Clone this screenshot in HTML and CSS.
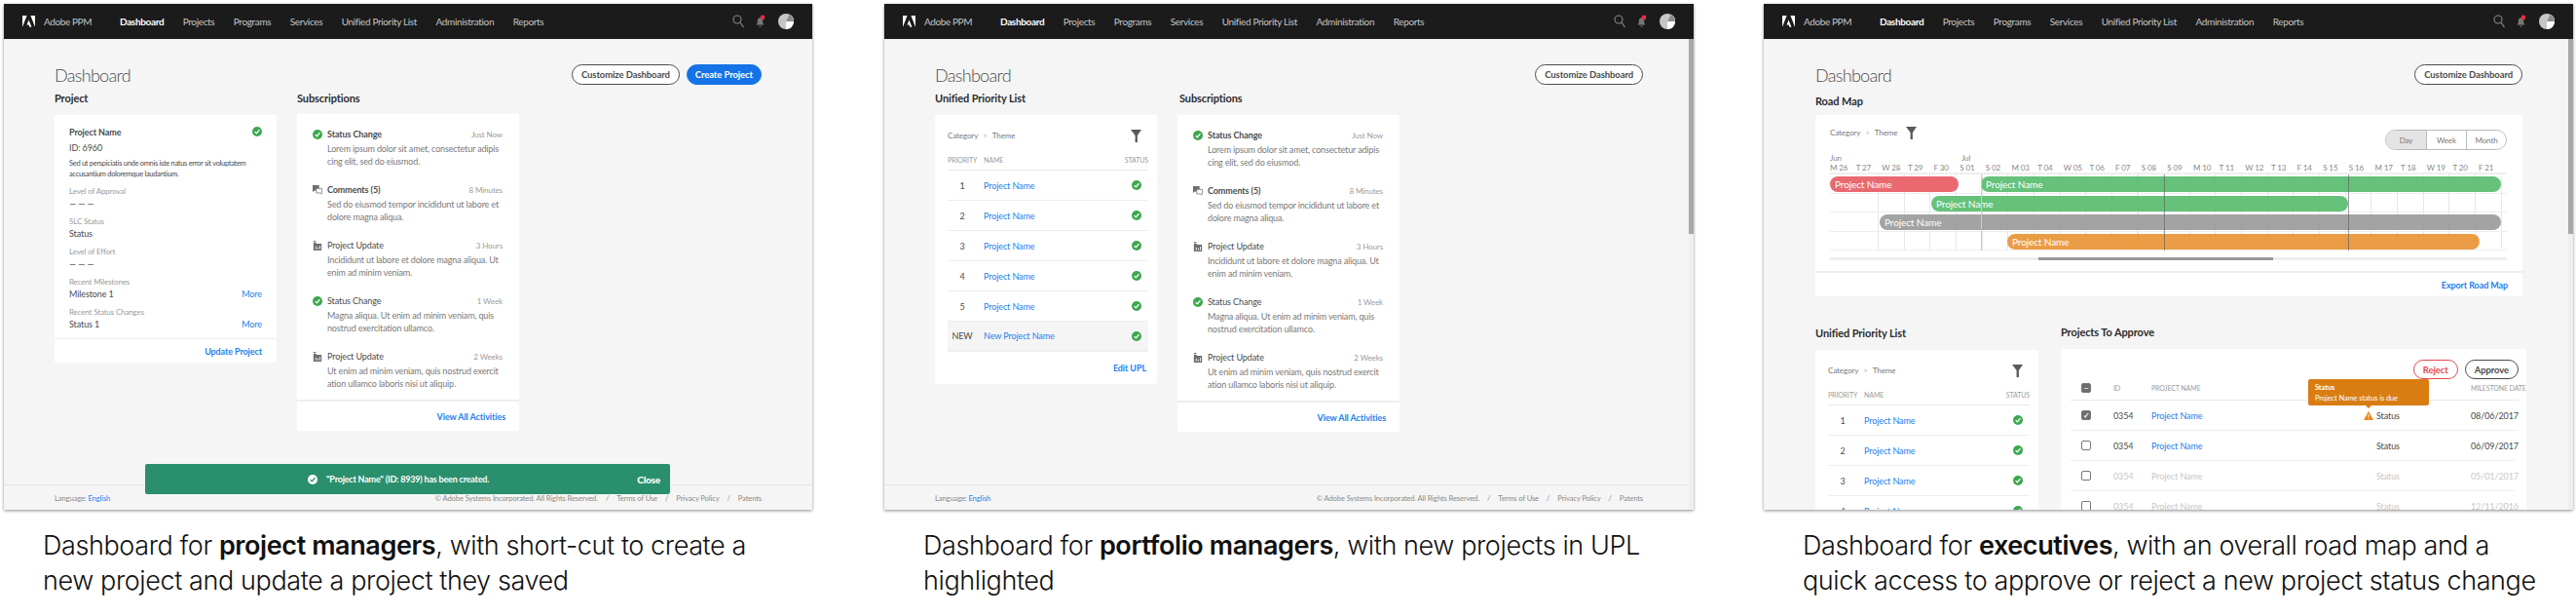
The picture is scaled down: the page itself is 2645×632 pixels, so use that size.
FILE: index.html
```html
<!DOCTYPE html>
<html lang="en">
<head>
    <meta charset="UTF-8">
    <title>Adobe PPM Dashboards</title>
    <link rel="stylesheet" href="styles.css">
</head>
<body>
    <svg class="icon-defs" width="0" height="0">
        <symbol id="i-logo" viewBox="0 0 24 22"><path d="M0 0h8.5L0 21.5zM15.5 0H24v21.5zM12 8l5.4 13.500h-3.700l-1.500-4h-3.900z" fill="#fff"/></symbol>
        <symbol id="i-search" viewBox="0 0 12 14"><circle cx="5" cy="5" r="4" fill="none" stroke="#8a8a8a" stroke-width="1.100"/><path d="M8 8l3.500 5" stroke="#8a8a8a" stroke-width="1.200" fill="none"/></symbol>
        <symbol id="i-bell" viewBox="0 0 11 14"><path d="M4.500 3.500a3 3 0 0 1 2 0c1.500.6 1.700 2 1.700 3.500 0 1.700.5 2.600 1.300 3.500H1.500c.8-.9 1.300-1.800 1.300-3.500 0-1.500.2-2.900 1.700-3.500z" fill="#777"/><path d="M4 11.500h3l-1.500 1.500z" fill="#777"/><circle cx="8" cy="3" r="2.400" fill="#e0313b"/></symbol>
        <symbol id="i-avatar" viewBox="0 0 16 16"><circle cx="8" cy="8" r="8" fill="#c6c6c6"/><path d="M8 8L11.500 .8A8 8 0 0 1 8 16z" fill="#fff"/><path d="M11.500 .8A8 8 0 0 1 16 8L8 8z" fill="#8c8c8c"/></symbol>
        <symbol id="i-check" viewBox="0 0 12 12"><circle cx="6" cy="6" r="6" fill="#3da74e"/><path d="M3.200 6.200l2 2.100 3.700-4.400" fill="none" stroke="#fff" stroke-width="1.500"/></symbol>
        <symbol id="i-check-white" viewBox="0 0 12 12"><circle cx="6" cy="6" r="6" fill="#fff"/><path d="M3.200 6.200l2 2.100 3.700-4.400" fill="none" stroke="#2a8f6c" stroke-width="1.500"/></symbol>
        <symbol id="i-comment" viewBox="0 0 12 12"><path d="M0 0h8v6.500H2.500L0 8.500z" fill="#6e6e6e"/><path d="M4.500 4h7v5.500h-1V11L9 9.500H4.500z" fill="#fff" stroke="#6e6e6e" stroke-width=".9"/></symbol>
        <symbol id="i-update" viewBox="0 0 12 12"><path d="M1 0h3v1.500H1zM1 2.500h3l1 1h6V12H1z" fill="#6e6e6e"/><path d="M4 10.500V7M6.500 10.500V8M9 10.500V6" stroke="#fff" stroke-width="1"/></symbol>
        <symbol id="i-filter" viewBox="0 0 12 14"><path d="M0 0h12L7.500 6.500V14h-2.500V6.500z" fill="#5a5a5a"/></symbol>
        <symbol id="i-warn" viewBox="0 0 10 9"><path d="M5 0l5 9H0z" fill="#e68619"/><path d="M5 3v3M5 6.800v1" stroke="#fff" stroke-width="1"/></symbol>
    </svg>

    <div class="shots">
        <!-- project managers -->
        <section class="shot">
            <div class="board">
                <header class="topbar">
                    <svg class="logo"><use href="#i-logo"/></svg>
                    <span class="product">Adobe PPM</span>
                    <nav class="nav">
                        <a class="active">Dashboard</a><a>Projects</a><a>Programs</a><a>Services</a><a>Unified Priority List</a><a>Administration</a><a>Reports</a>
                    </nav>
                    <svg class="ic-search"><use href="#i-search"/></svg>
                    <svg class="ic-bell"><use href="#i-bell"/></svg>
                    <svg class="ic-avatar"><use href="#i-avatar"/></svg>
                </header>
                <main class="content">
                    <div class="page-head">
                        <h1>Dashboard</h1>
                        <div class="btns">
                            <button class="btn">Customize Dashboard</button>
                            <button class="btn btn-blue">Create Project</button>
                        </div>
                    </div>
                    <div class="columns">
                        <div class="col">
                            <h2>Project</h2>
                            <div class="card project-card">
                                <div class="project-body">
                                    <div class="project-top"><b>Project Name</b><svg class="ic"><use href="#i-check"/></svg></div>
                                    <div class="project-id">ID: 6960</div>
                                    <p class="project-desc">Sed ut perspiciatis unde omnis iste natus error sit voluptatem<br>accusantium doloremque laudantium.</p>
                                    <div class="field"><label>Level of Approval</label><div class="val">— — —</div></div>
                                    <div class="field"><label>SLC Status</label><div class="val">Status</div></div>
                                    <div class="field"><label>Level of Effort</label><div class="val">— — —</div></div>
                                    <div class="field"><label>Recent Milestones</label><div class="val">Milestone 1<a>More</a></div></div>
                                    <div class="field"><label>Recent Status Changes</label><div class="val">Status 1<a>More</a></div></div>
                                </div>
                                <div class="card-foot"><a>Update Project</a></div>
                            </div>
                        </div>
                        <div class="col">
                            <h2>Subscriptions</h2>
                            <div class="card subs-card subs-up">
                                <div class="subs-list">
                                    <div class="sub"><div class="sub-top"><svg class="ic"><use href="#i-check"/></svg><b>Status Change</b><span>Just Now</span></div><p>Lorem ipsum dolor sit amet, consectetur adipis<br>cing elit, sed do eiusmod.</p></div>
                                    <div class="sub"><div class="sub-top"><svg class="ic"><use href="#i-comment"/></svg><b>Comments (5)</b><span>8 Minutes</span></div><p>Sed do eiusmod tempor incididunt ut labore et<br>dolore magna aliqua.</p></div>
                                    <div class="sub"><div class="sub-top"><svg class="ic"><use href="#i-update"/></svg><b class="plain">Project Update</b><span>3 Hours</span></div><p>Incididunt ut labore et dolore magna aliqua. Ut<br>enim ad minim veniam.</p></div>
                                    <div class="sub"><div class="sub-top"><svg class="ic"><use href="#i-check"/></svg><b class="plain">Status Change</b><span>1 Week</span></div><p>Magna aliqua. Ut enim ad minim veniam, quis<br>nostrud exercitation ullamco.</p></div>
                                    <div class="sub"><div class="sub-top"><svg class="ic"><use href="#i-update"/></svg><b class="plain">Project Update</b><span>2 Weeks</span></div><p>Ut enim ad minim veniam, quis nostrud exercit<br>ation ullamco laboris nisi ut aliquip.</p></div>
                                </div>
                                <div class="card-foot subs-foot"><a>View All Activities</a></div>
                            </div>
                        </div>
                    </div>
                </main>
                <footer class="foot">
                    <div>Language: <a>English</a></div>
                    <div class="foot-links"><span>© Adobe Systems Incorporated. All Rights Reserved.</span><i>/</i><span>Terms of Use</span><i>/</i><span>Privacy Policy</span><i>/</i><span>Patents</span></div>
                </footer>
                <div class="toast">
                    <svg class="ic"><use href="#i-check-white"/></svg>
                    <span>"Project Name" (ID: 8939) has been created.</span>
                    <b>Close</b>
                </div>
            </div>
            <p class="caption">Dashboard for <strong>project managers</strong>, with short-cut to create a<br>new project and update a project they saved</p>
        </section>

        <!-- portfolio managers -->
        <section class="shot shot-b">
            <div class="board">
                <header class="topbar">
                    <svg class="logo"><use href="#i-logo"/></svg>
                    <span class="product">Adobe PPM</span>
                    <nav class="nav">
                        <a class="active">Dashboard</a><a>Projects</a><a>Programs</a><a>Services</a><a>Unified Priority List</a><a>Administration</a><a>Reports</a>
                    </nav>
                    <svg class="ic-search"><use href="#i-search"/></svg>
                    <svg class="ic-bell"><use href="#i-bell"/></svg>
                    <svg class="ic-avatar"><use href="#i-avatar"/></svg>
                </header>
                <main class="content">
                    <div class="page-head">
                        <h1>Dashboard</h1>
                        <div class="btns"><button class="btn">Customize Dashboard</button></div>
                    </div>
                    <div class="columns">
                        <div class="col">
                            <h2>Unified Priority List</h2>
                            <div class="card upl-card">
                                <div class="upl-filter"><span class="crumb">Category<em>&gt;</em>Theme</span><svg class="ic-filter"><use href="#i-filter"/></svg></div>
                                <div class="upl-head"><span>PRIORITY</span><span>NAME</span><span>STATUS</span></div>
                                <div class="upl-row"><span>1</span><a>Project Name</a><svg class="ic"><use href="#i-check"/></svg></div>
                                <div class="upl-row"><span>2</span><a>Project Name</a><svg class="ic"><use href="#i-check"/></svg></div>
                                <div class="upl-row"><span>3</span><a>Project Name</a><svg class="ic"><use href="#i-check"/></svg></div>
                                <div class="upl-row"><span>4</span><a>Project Name</a><svg class="ic"><use href="#i-check"/></svg></div>
                                <div class="upl-row"><span>5</span><a>Project Name</a><svg class="ic"><use href="#i-check"/></svg></div>
                                <div class="upl-row upl-new"><span>NEW</span><a>New Project Name</a><svg class="ic"><use href="#i-check"/></svg></div>
                                <div class="upl-foot"><a>Edit UPL</a></div>
                            </div>
                        </div>
                        <div class="col">
                            <h2 class="nudge">Subscriptions</h2>
                            <div class="card subs-card">
                                <div class="subs-list">
                                    <div class="sub"><div class="sub-top"><svg class="ic"><use href="#i-check"/></svg><b>Status Change</b><span>Just Now</span></div><p>Lorem ipsum dolor sit amet, consectetur adipis<br>cing elit, sed do eiusmod.</p></div>
                                    <div class="sub"><div class="sub-top"><svg class="ic"><use href="#i-comment"/></svg><b>Comments (5)</b><span>8 Minutes</span></div><p>Sed do eiusmod tempor incididunt ut labore et<br>dolore magna aliqua.</p></div>
                                    <div class="sub"><div class="sub-top"><svg class="ic"><use href="#i-update"/></svg><b class="plain">Project Update</b><span>3 Hours</span></div><p>Incididunt ut labore et dolore magna aliqua. Ut<br>enim ad minim veniam.</p></div>
                                    <div class="sub"><div class="sub-top"><svg class="ic"><use href="#i-check"/></svg><b class="plain">Status Change</b><span>1 Week</span></div><p>Magna aliqua. Ut enim ad minim veniam, quis<br>nostrud exercitation ullamco.</p></div>
                                    <div class="sub"><div class="sub-top"><svg class="ic"><use href="#i-update"/></svg><b class="plain">Project Update</b><span>2 Weeks</span></div><p>Ut enim ad minim veniam, quis nostrud exercit<br>ation ullamco laboris nisi ut aliquip.</p></div>
                                </div>
                                <div class="card-foot subs-foot"><a>View All Activities</a></div>
                            </div>
                        </div>
                    </div>
                </main>
                <footer class="foot">
                    <div>Language: <a>English</a></div>
                    <div class="foot-links"><span>© Adobe Systems Incorporated. All Rights Reserved.</span><i>/</i><span>Terms of Use</span><i>/</i><span>Privacy Policy</span><i>/</i><span>Patents</span></div>
                </footer>
                <div class="scroll-track"><div class="scroll-thumb"></div></div>
            </div>
            <p class="caption">Dashboard for <strong>portfolio managers</strong>, with new projects in UPL<br>highlighted</p>
        </section>

        <!-- executives -->
        <section class="shot shot-c">
            <div class="board">
                <header class="topbar">
                    <svg class="logo"><use href="#i-logo"/></svg>
                    <span class="product">Adobe PPM</span>
                    <nav class="nav">
                        <a class="active">Dashboard</a><a>Projects</a><a>Programs</a><a>Services</a><a>Unified Priority List</a><a>Administration</a><a>Reports</a>
                    </nav>
                    <svg class="ic-search"><use href="#i-search"/></svg>
                    <svg class="ic-bell"><use href="#i-bell"/></svg>
                    <svg class="ic-avatar"><use href="#i-avatar"/></svg>
                </header>
                <main class="content content-c">
                    <div class="page-head">
                        <h1>Dashboard</h1>
                        <div class="btns"><button class="btn">Customize Dashboard</button></div>
                    </div>
                    <h2 class="road-title">Road Map</h2>
                    <div class="card road-card">
                        <div class="road-body">
                            <div class="road-top">
                                <span class="crumb">Category<em>&gt;</em>Theme<svg class="ic-filter"><use href="#i-filter"/></svg></span>
                                <div class="toggle"><span class="on">Day</span><span>Week</span><span>Month</span></div>
                            </div>
                            <div class="months"><span>Jun</span><span class="jul">Jul</span></div>
                            <div class="days">
                                <span>M 26</span><span>T 27</span><span>W 28</span><span>T 29</span><span>F 30</span><span>S 01</span><span>S 02</span><span>M 03</span><span>T 04</span><span>W 05</span><span>T 06</span><span>F 07</span><span>S 08</span><span>S 09</span><span>M 10</span><span>T 11</span><span>W 12</span><span>T 13</span><span>F 14</span><span>S 15</span><span>S 16</span><span>M 17</span><span>T 18</span><span>W 19</span><span>T 20</span><span>F 21</span>
                            </div>
                            <div class="gantt">
                                <div class="gantt-row"><div class="bar bar-red" style="width:132px">Project Name</div><div class="bar bar-green" style="margin-left:23px;width:534px">Project Name</div></div>
                                <div class="gantt-row"><div class="bar bar-green" style="margin-left:104px;width:428px">Project Name</div></div>
                                <div class="gantt-row"><div class="bar bar-grey" style="margin-left:51px;width:638px">Project Name</div></div>
                                <div class="gantt-row"><div class="bar bar-orange" style="margin-left:182px;width:485px">Project Name</div></div>
                                <div class="gantt-mark" style="left:155px"></div>
                                <div class="gantt-mark gantt-dark" style="left:343px"></div>
                                <div class="gantt-mark gantt-dark" style="left:532px"></div>
                            </div>
                            <div class="gantt-scroll"><div class="gantt-thumb"></div></div>
                        </div>
                        <div class="card-foot road-foot"><a>Export Road Map</a></div>
                    </div>
                    <div class="columns columns-c">
                        <div class="col col-upl">
                            <h2 class="low-title">Unified Priority List</h2>
                            <div class="card upl-card upl-c">
                                <div class="upl-filter"><span class="crumb">Category<em>&gt;</em>Theme</span><svg class="ic-filter"><use href="#i-filter"/></svg></div>
                                <div class="upl-head"><span>PRIORITY</span><span>NAME</span><span>STATUS</span></div>
                                <div class="upl-row"><span>1</span><a>Project Name</a><svg class="ic"><use href="#i-check"/></svg></div>
                                <div class="upl-row"><span>2</span><a>Project Name</a><svg class="ic"><use href="#i-check"/></svg></div>
                                <div class="upl-row"><span>3</span><a>Project Name</a><svg class="ic"><use href="#i-check"/></svg></div>
                                <div class="upl-row"><span>4</span><a>Project Name</a><svg class="ic"><use href="#i-check"/></svg></div>
                            </div>
                        </div>
                        <div class="col col-approve">
                            <h2 class="low-title">Projects To Approve</h2>
                            <div class="card approve-card">
                                <div class="approve-btns"><button class="btn btn-red">Reject</button><button class="btn">Approve</button></div>
                                <div class="ap-row ap-head"><span class="box box-on">−</span><span>ID</span><span>PROJECT NAME</span><span>PROJECT STATUS</span><span>MILESTONE DATE</span></div>
                                <div class="ap-row"><span class="box box-on">✓</span><span>0354</span><a>Project Name</a><span class="ap-status"><svg class="ic-warn"><use href="#i-warn"/></svg>Status</span><span>08/06/2017</span></div>
                                <div class="ap-row ap-short"><span class="box"></span><span>0354</span><a>Project Name</a><span>Status</span><span>06/09/2017</span></div>
                                <div class="ap-row ap-short ap-off"><span class="box"></span><span>0354</span><span>Project Name</span><span>Status</span><span>05/01/2017</span></div>
                                <div class="ap-row ap-short ap-off"><span class="box"></span><span>0354</span><span>Project Name</span><span>Status</span><span>12/11/2016</span></div>
                                <div class="tip"><b>Status</b><span>Project Name status is due</span></div>
                            </div>
                        </div>
                    </div>
                </main>
                <div class="scroll-track"><div class="scroll-thumb"></div></div>
            </div>
            <p class="caption">Dashboard for <strong>executives</strong>, with an overall road map and a<br>quick access to approve or reject a new project status change</p>
        </section>
    </div>
</body>
</html>
```
FILE: styles.css
```css
* {
    box-sizing: border-box;
}

html, body {
    margin: 0;
    background: #fff;
}

body {
    font-family: "Lato", "Open Sans", sans-serif;
    font-size: 9px;
    letter-spacing: -0.1px;
    color: #4b4b4b;
    overflow: hidden;
}

a {
    color: #2680eb;
}

.icon-defs {
    position: absolute;
}

.shots {
    display: flex;
    padding: 4px 0 0 4px;
}

.shot {
    width: 830px;
    flex: none;
}

.shot-b {
    width: 831px;
    margin-left: 74px;
}

.shot-c {
    width: 831px;
    margin-left: 72px;
}

.board {
    position: relative;
    display: flex;
    flex-direction: column;
    height: 519px;
    overflow: hidden;
    background: #f5f5f5;
    box-shadow: 0 1px 3px rgba(0, 0, 0, 0.45);
}

.caption {
    margin: 19px 0 0;
    padding-left: 40px;
    font-family: "Inter", "Liberation Sans", sans-serif;
    font-size: 27px;
    font-weight: 300;
    line-height: 35.500px;
    letter-spacing: -0.4px;
    white-space: nowrap;
    color: #111;
}

.caption strong {
    font-weight: 600;
}

/* top bar */
.topbar {
    display: flex;
    align-items: center;
    flex: none;
    height: 36px;
    padding-left: 19px;
    background: #1b1b1b;
}

.logo {
    width: 13px;
    height: 12px;
    margin-right: 9px;
}

.product {
    width: 78px;
    font-size: 10px;
    letter-spacing: -0.4px;
    color: #c4c4c4;
}

.nav {
    display: flex;
    flex: 1;
    gap: 19.500px;
    font-size: 10px;
    letter-spacing: -0.35px;
}

.nav a {
    color: #c4c4c4;
}

.nav a.active {
    color: #fff;
    font-weight: 700;
}

.ic-search {
    width: 12px;
    height: 14px;
}

.ic-bell {
    width: 11px;
    height: 14px;
    margin-left: 11px;
}

.ic-avatar {
    width: 16px;
    height: 16px;
    margin: 0 19px 0 13px;
}

/* page */
.content {
    flex: 1;
    padding: 0 52px;
    min-height: 0;
}

.content-c {
    padding-left: 53px;
}

.page-head {
    display: flex;
    justify-content: space-between;
    align-items: center;
    height: 21px;
    margin-top: 26px;
}

h1 {
    margin: 0;
    font-size: 18px;
    font-weight: 300;
    letter-spacing: -0.7px;
    color: #4b4b4b;
}

.btns {
    display: flex;
    gap: 7px;
}

.btn {
    height: 21px;
    padding: 0 9px;
    border: 1.500px solid #4b4b4b;
    border-radius: 11px;
    background: #fff;
    font-family: inherit;
    font-size: 9.500px;
    font-weight: 700;
    letter-spacing: -0.1px;
    color: #4b4b4b;
}

.btn-blue {
    padding: 0 8px;
    border-color: #1473e6;
    background: #1473e6;
    color: #fff;
}

.btn-red {
    border-color: #e34850;
    color: #e34850;
}

.columns {
    display: flex;
    gap: 21px;
}

.col {
    width: 228px;
    flex: none;
}

h2 {
    height: 14px;
    margin: 7px 0 10px;
    font-size: 11px;
    font-weight: 700;
    line-height: 14px;
    color: #2c2c2c;
}

h2.nudge {
    margin-left: 2px;
}

.card {
    background: #fff;
    border-radius: 2px;
}

.card-foot {
    display: flex;
    justify-content: flex-end;
    align-items: center;
    height: 25px;
    padding-right: 15px;
    border-top: 1px solid #eee;
    font-weight: 700;
}

.ic {
    width: 10px;
    height: 10px;
    flex: none;
}

/* project card */
.project-body {
    padding: 12px 15px 0;
    height: 229px;
}

.project-top {
    display: flex;
    justify-content: space-between;
    height: 12px;
    line-height: 12px;
}

.project-id {
    height: 12px;
    margin-top: 4px;
    line-height: 12px;
}

.project-desc {
    margin: 5px 0 6px;
    font-size: 7.500px;
    letter-spacing: -0.3px;
    line-height: 10.500px;
    white-space: nowrap;
}

.field {
    height: 31px;
}

.field label {
    display: block;
    height: 12px;
    font-size: 8px;
    letter-spacing: -0.15px;
    line-height: 12px;
    color: #9b9b9b;
}

.val {
    display: flex;
    justify-content: space-between;
    height: 13px;
    line-height: 13px;
}

/* subscriptions */
.subs-up {
    margin-top: -1px;
}

.subs-list {
    padding: 14px 17px 0 16px;
    height: 293px;
}

.sub {
    height: 57px;
}

.sub-top {
    display: flex;
    align-items: center;
    gap: 5px;
    height: 13px;
}

.sub-top b {
    flex: 1;
}

.sub-top b.plain {
    font-weight: 400;
}

.sub-top span {
    font-size: 8px;
    color: #9b9b9b;
}

.sub p {
    margin: 2px 0 0;
    padding-left: 15px;
    letter-spacing: -0.15px;
    line-height: 13px;
    white-space: nowrap;
    color: #7a7a7a;
}

.subs-foot {
    height: 32px;
    border-top-width: 2px;
    padding-right: 14px;
}

/* priority list */
.upl-card {
    height: 276px;
    padding: 14px 9px 0 13px;
}

.upl-filter {
    display: flex;
    justify-content: space-between;
    align-items: center;
    height: 14px;
    padding-right: 7px;
}

.crumb {
    font-size: 8px;
    color: #777;
}

.crumb em {
    margin: 0 5px;
    font-style: normal;
    color: #aaa;
}

.ic-filter {
    width: 11px;
    height: 13px;
}

.road-top .ic-filter {
    margin-left: 9px;
    vertical-align: middle;
}

.upl-head {
    display: grid;
    grid-template-columns: 37px 1fr auto;
    align-items: center;
    height: 16px;
    margin-top: 13px;
    padding-bottom: 5px;
    border-bottom: 1px solid #e8e8e8;
    font-size: 7px;
    color: #9b9b9b;
}

.upl-row {
    display: grid;
    grid-template-columns: 30px 1fr auto;
    column-gap: 7px;
    align-items: center;
    height: 31px;
    padding-right: 7px;
    border-bottom: 1px solid #eee;
}

.upl-row span {
    text-align: center;
}

.upl-new {
    background: #f5f5f5;
    border-bottom: 2px solid #eee;
}

.upl-foot {
    display: flex;
    justify-content: flex-end;
    align-items: center;
    height: 33px;
    font-weight: 700;
}

.upl-foot a {
    margin-right: 2px;
}

/* road map */
.road-title {
    margin: 10px 0 7px;
}

.road-card {
    width: 726px;
    height: 186px;
}

.road-body {
    height: 160px;
    padding: 12px 16px 0 15px;
}

.road-top {
    display: flex;
    justify-content: space-between;
    height: 24px;
}

.toggle {
    display: flex;
    align-self: flex-end;
    height: 21px;
    border: 1px solid #bbb;
    border-radius: 11px;
    overflow: hidden;
    font-size: 8px;
    color: #777;
}

.toggle span {
    display: flex;
    justify-content: center;
    align-items: center;
    width: 41px;
    border-left: 1px solid #bbb;
}

.toggle span:first-child {
    border-left: none;
}

.toggle .on {
    background: #e4e4e4;
}

.months {
    display: flex;
    height: 10px;
    margin-top: 3px;
    font-size: 8px;
    line-height: 10px;
    color: #888;
}

.jul {
    margin-left: 123px;
}

.days {
    display: flex;
    height: 12px;
    border-bottom: 2px solid #eee;
    font-size: 8px;
    line-height: 10px;
    color: #888;
}

.days span {
    width: 26.650px;
    flex: none;
}

.gantt {
    position: relative;
    height: 78px;
    background-image: repeating-linear-gradient(90deg, #e6e6e6 0, #e6e6e6 1px, transparent 1px, transparent 26.650px);
    background-position: 49px 0;
    background-size: calc(100% - 49px) 100%;
    background-repeat: no-repeat;
}

.gantt-row {
    display: flex;
    height: 19.500px;
    padding-top: 2px;
    border-bottom: 1px solid #eee;
}

.bar {
    height: 16px;
    padding-left: 5px;
    border-radius: 8px;
    font-size: 10px;
    line-height: 16px;
    color: #fff;
}

.bar-red {
    background: rgba(232, 89, 98, 0.9);
}

.bar-green {
    background: rgba(85, 187, 107, 0.9);
}

.bar-grey {
    background: rgba(153, 153, 153, 0.9);
}

.bar-orange {
    background: rgba(232, 146, 48, 0.9);
}

.gantt-mark {
    position: absolute;
    top: 0;
    bottom: 0;
    width: 1px;
    background: #ccc;
}

.gantt-dark {
    background: rgba(90, 90, 90, 0.6);
}

.gantt-scroll {
    height: 3px;
    margin-top: 7px;
    background: #eee;
}

.gantt-thumb {
    width: 241px;
    height: 3px;
    margin-left: 214px;
    background: #999;
}

.road-foot {
    height: 26px;
    border-top-width: 2px;
}

/* lower row of the executive board */
.columns-c {
    gap: 23px;
}

.col-upl {
    width: 229px;
}

.col-approve {
    width: 478px;
}

.low-title {
    margin: 31px 0 10px;
}

.col-approve .low-title {
    margin-top: 30px;
}

.upl-c {
    height: 180px;
}

.approve-card {
    position: relative;
    height: 180px;
    padding: 11px 8px 0 10px;
}

.approve-btns {
    display: flex;
    justify-content: flex-end;
    gap: 7px;
    height: 20px;
}

.approve-btns .btn {
    height: 20px;
    padding: 0 9px;
}

.ap-row {
    display: grid;
    grid-template-columns: 44px 39px 231px 97px 1fr;
    align-items: center;
    height: 31px;
    border-bottom: 1px solid #eee;
    white-space: nowrap;
}

.ap-head {
    height: 22px;
    padding-bottom: 3px;
    border-bottom-color: #e8e8e8;
    font-size: 7px;
    color: #9b9b9b;
}

.ap-short {
    margin-right: 4px;
}

.ap-off,
.ap-off .box {
    color: #c8c8c8;
}

.box {
    display: flex;
    justify-content: center;
    align-items: center;
    width: 10px;
    height: 10px;
    margin-left: 11px;
    border: 1px solid #777;
    border-radius: 2px;
    font-size: 8px;
    font-weight: 700;
    color: #fff;
}

.box-on {
    background: #6e6e6e;
}

.ap-status {
    position: relative;
}

.ic-warn {
    position: absolute;
    left: -13px;
    top: 1px;
    width: 10px;
    height: 9px;
}

.tip {
    position: absolute;
    left: 254px;
    top: 31px;
    display: flex;
    flex-direction: column;
    justify-content: center;
    gap: 2px;
    width: 124px;
    height: 27px;
    padding-left: 7px;
    border-radius: 2px;
    background: #d97d12;
    font-size: 7.500px;
    color: #fff;
}

.tip::after {
    content: "";
    position: absolute;
    left: 59px;
    top: 27px;
    border: 3px solid transparent;
    border-top-color: #d97d12;
}

/* footer */
.foot {
    display: flex;
    justify-content: space-between;
    align-items: center;
    flex: none;
    height: 26px;
    padding: 0 52px;
    border-top: 1px solid #e4e4e4;
    font-size: 7.600px;
    letter-spacing: -0.12px;
    color: #8a8a8a;
}

.foot-links i {
    margin: 0 8px;
    font-style: normal;
}

/* overlays */
.toast {
    position: absolute;
    left: 145px;
    top: 472px;
    display: flex;
    align-items: center;
    width: 539px;
    height: 31px;
    padding-left: 167px;
    border-radius: 2px;
    background: #2a8f6c;
    font-weight: 700;
    letter-spacing: -0.2px;
    color: #fff;
}

.toast span {
    flex: 1;
    margin-left: 9px;
}

.toast b {
    margin-right: 10px;
    font-size: 10px;
}

.scroll-track {
    position: absolute;
    right: 0;
    top: 36px;
    bottom: 0;
    width: 5px;
    background: #eee;
}

.scroll-thumb {
    height: 200px;
    background: #a8a8a8;
}
```
